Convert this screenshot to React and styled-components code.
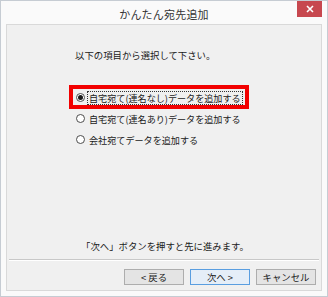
import React from "react";
import styled, { createGlobalStyle } from "styled-components";

const Global = createGlobalStyle`
  html, body { margin: 0; padding: 0; background: #ffffff; }
  #root { width: 328px; height: 297px; }
  * { box-sizing: border-box; }
`;

const FONT = `"Noto Sans CJK JP", "Noto Sans CJK SC", sans-serif`;

const Window = styled.div`
  width: 328px;
  height: 297px;
  border: 1px solid #c6ccd3;
  background: #fafafa;
  display: flex;
  flex-direction: column;
  padding: 0 5px 5px 5px;
  font-family: ${FONT};
  color: #1a1a1a;
`;

const TitleBar = styled.div`
  height: 23px;
  display: grid;
  grid-template-columns: 1fr auto 1fr;
  align-items: start;
  margin: 0 -5px;
`;

const Title = styled.div`
  grid-column: 2;
  font-size: 11px;
  line-height: 27px;
  color: #333;
  letter-spacing: 0.2px;
`;

const CloseButton = styled.div`
  grid-column: 3;
  justify-self: end;
  margin-right: 5px;
  width: 25px;
  height: 16px;
  background: #c7484f;
  display: flex;
  align-items: center;
  justify-content: center;
`;

const Panel = styled.div`
  flex: 1;
  border: 1px solid #d9d9d9;
  background: #f0f0f0;
  display: flex;
  flex-direction: column;
  padding: 24px 1px 5px 1px;
`;

const Instruction = styled.div`
  font-size: 9.4px;
  line-height: 12px;
  padding-left: 67px;
  color: #1a1a1a;
`;

const OptionList = styled.div`
  margin-top: 26px;
  padding-left: 68px;
  display: flex;
  flex-direction: column;
`;

const Option = styled.label`
  position: relative;
  height: 21px;
  display: flex;
  align-items: center;
  gap: 3px;
  font-size: 9.1px;
  color: #1a1a1a;
`;

const Radio = styled.span`
  width: 9px;
  height: 9px;
  border-radius: 50%;
  border: 1px solid #4d4d4d;
  background: #fff;
  display: flex;
  align-items: center;
  justify-content: center;
  flex: none;
  &::after {
    content: "";
    width: 5px;
    height: 5px;
    border-radius: 50%;
    background: ${(p) => (p.$checked ? "#1a1a1a" : "transparent")};
  }
`;

const OptionText = styled.span`
  line-height: 12px;
  padding: 0 1px;
  outline: ${(p) => (p.$focused ? "1px dotted #333" : "none")};
  white-space: nowrap;
`;

const Highlight = styled.div`
  position: absolute;
  left: -7px;
  top: -2px;
  width: 180px;
  height: 24px;
  border: 4px solid #f20000;
  pointer-events: none;
`;

const Spacer = styled.div`
  flex: 1;
`;

const Note = styled.div`
  text-align: center;
  font-size: 9.4px;
  line-height: 12px;
  margin-bottom: 7px;
  padding-left: 2px;
`;

const Separator = styled.div`
  height: 2px;
  border-top: 1px solid #c8c8c8;
  border-bottom: 1px solid #ffffff;
  margin: 0 1px;
`;

const ButtonRow = styled.div`
  display: flex;
  justify-content: flex-end;
  gap: 6px;
  padding-top: 8px;
  padding-right: 4px;
`;

const Button = styled.div`
  width: 60px;
  height: 16px;
  border: 1px solid ${(p) => (p.$default ? "#5a9ee0" : "#adadad")};
  background: ${(p) => (p.$default ? "#e5eef8" : "#e4e4e4")};
  font-size: 9.4px;
  line-height: 14px;
  text-align: center;
  color: #1a1a1a;
`;

export default function App() {
  return (
    <>
      <Global />
      <Window>
        <TitleBar>
          <Title>かんたん宛先追加</Title>
          <CloseButton>
            <svg width="8" height="8" viewBox="0 0 8 8">
              <path d="M1 1 L7 7 M7 1 L1 7" stroke="#fff" strokeWidth="1.6" />
            </svg>
          </CloseButton>
        </TitleBar>
        <Panel>
          <Instruction>以下の項目から選択して下さい。</Instruction>
          <OptionList>
            <Option>
              <Highlight />
              <Radio $checked />
              <OptionText $focused>自宅宛て(連名なし)データを追加する</OptionText>
            </Option>
            <Option>
              <Radio />
              <OptionText>自宅宛て(連名あり)データを追加する</OptionText>
            </Option>
            <Option>
              <Radio />
              <OptionText>会社宛てデータを追加する</OptionText>
            </Option>
          </OptionList>
          <Spacer />
          <Note>「次へ」ボタンを押すと先に進みます。</Note>
          <Separator />
          <ButtonRow>
            <Button>&lt; 戻る</Button>
            <Button $default>次へ &gt;</Button>
            <Button>キャンセル</Button>
          </ButtonRow>
        </Panel>
      </Window>
    </>
  );
}
